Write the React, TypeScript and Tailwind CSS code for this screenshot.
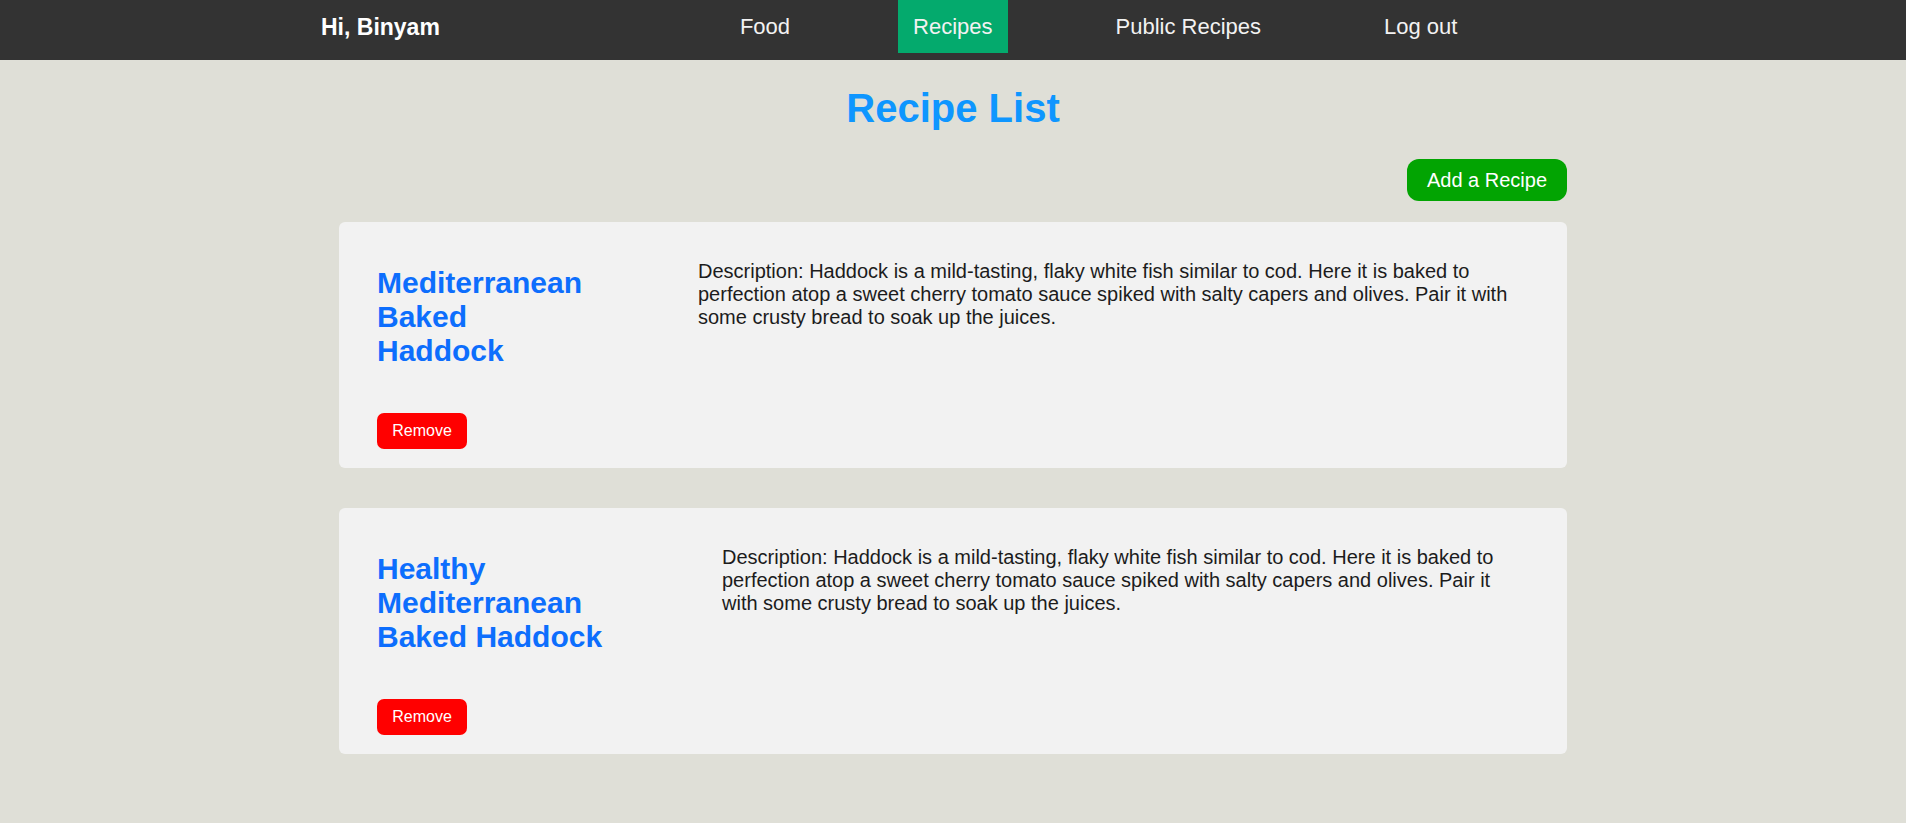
import React from 'react';

interface Recipe {
  id: number;
  name: string;
  titleWidth: string;
  description: string;
}

const DESCRIPTION =
  'Description: Haddock is a mild-tasting, flaky white fish similar to cod. Here it is baked to perfection atop a sweet cherry tomato sauce spiked with salty capers and olives. Pair it with some crusty bread to soak up the juices.';

const recipes: Recipe[] = [
  { id: 1, name: 'Mediterranean Baked Haddock', titleWidth: 'w-[215px]', description: DESCRIPTION },
  { id: 2, name: 'Healthy Mediterranean Baked Haddock', titleWidth: 'w-[239px]', description: DESCRIPTION },
];

const links = [
  { label: 'Food', active: false },
  { label: 'Recipes', active: true },
  { label: 'Public Recipes', active: false },
  { label: 'Log out', active: false },
];

const Navbar: React.FC = () => (
  <nav className="flex h-[60px] items-start bg-[#333333] text-white">
    <div className="ml-[321px] mt-[14px] text-[23px] font-bold leading-[26px]">Hi, Binyam</div>
    <ul className="ml-[285px] flex gap-[93px]">
      {links.map((link) => (
        <li key={link.label}>
          <a
            href="#"
            className={
              link.active
                ? 'block bg-[#04aa6d] px-[15px] py-[14px] text-[22px] leading-[25px] text-[#f2f2f2]'
                : 'block px-[15px] py-[14px] text-[22px] leading-[25px] text-[#f2f2f2]'
            }
          >
            {link.label}
          </a>
        </li>
      ))}
    </ul>
  </nav>
);

const RecipeCard: React.FC<{ recipe: Recipe }> = ({ recipe }) => (
  <div className="flex rounded-[6px] bg-[#f2f2f2] pb-[19px] pl-[38px] pr-[44px] pt-[18px]">
    <div className={`flex shrink-0 flex-col items-start ${recipe.titleWidth}`}>
      <h2 className="mt-[26px] text-[30px] font-bold leading-[34px] text-[#0d6efd]">{recipe.name}</h2>
      <button className="mt-[45px] h-[36px] w-[90px] rounded-[7px] bg-[#ff0000] text-[16px] leading-[18px] text-white">
        Remove
      </button>
    </div>
    <p className="ml-[106px] mt-[20px] flex-1 text-[20px] leading-[23px] text-[#1c1c1c]">{recipe.description}</p>
  </div>
);

export default function App() {
  return (
    <div className="min-h-screen bg-[#dfdfd7] font-['Liberation_Sans',Arial,sans-serif]">
      <Navbar />
      <main className="mx-auto w-[1228px]">
        <h1 className="mt-[25px] text-center text-[40px] font-bold leading-[46px] text-[#0e96ff]">Recipe List</h1>
        <div className="mt-[28px] flex justify-end">
          <button className="h-[42px] rounded-[12px] bg-[#02a402] px-[20px] text-[20px] leading-[23px] text-white">
            Add a Recipe
          </button>
        </div>
        <div className="mt-[21px] flex flex-col gap-[40px]">
          {recipes.map((recipe) => (
            <RecipeCard key={recipe.id} recipe={recipe} />
          ))}
        </div>
      </main>
    </div>
  );
}
